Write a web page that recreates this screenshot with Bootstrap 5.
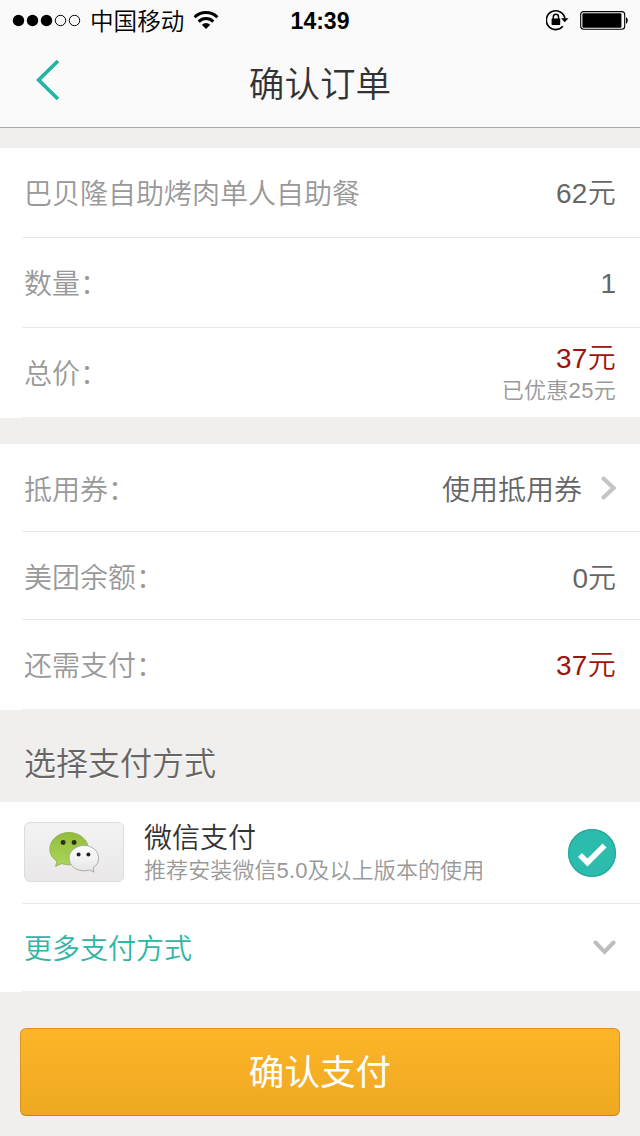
<!DOCTYPE html>
<html lang="zh-CN">
<head>
<meta charset="utf-8">
<meta name="viewport" content="width=device-width, initial-scale=1">
<title>确认订单</title>
<link href="https://cdn.jsdelivr.net/npm/bootstrap@5.3.0/dist/css/bootstrap.min.css" rel="stylesheet">
<style>
  body { font-family: "Liberation Sans", "Noto Sans CJK SC", sans-serif; font-weight: 350; font-size: 28px; line-height: 36px; background: #f0efed; color: #666; min-height: 1136px; }
  svg { display: block; flex: none; }
  .top-area { height: 128px; background: #fafafa; border-bottom: 1px solid #a9a9a9; }
  .status-bar { height: 40px; color: #000; font-size: 23.6px; padding: 0 12px; }
  .status-side { flex: 1 1 0; }
  .carrier { margin: 0 9px; padding-top: 3px; }
  .clock { font-weight: 700; font-size: 23px; padding-top: 2px; }
  .title-bar { height: 87px; padding: 0 36px; }
  .title-bar h1 { font-size: 35.6px; font-weight: 350; line-height: 48px; color: #333; padding-top: 3px; }
  .title-bar .edge { width: 24px; }
  .title-bar a { margin-top: -6px; }
  .sheet { background: #fff; padding-left: 22px; }
  .line-item { height: 90px; padding: 0 24px 0 2px; border-bottom: 1px solid #e8e8e8; }
  .line-item.short { height: 88px; }
  .line-item.pay { height: 102px; }
  .line-item:last-child { border-bottom-color: #f0efed; }
  .caption { color: #999; padding-top: 4px; }
  .amount { padding-top: 3px; }
  .short .caption, .short .amount { padding-top: 6px; }
  .price { color: #9c150d; }
  .digits { letter-spacing: .3px; }
  .fine { font-size: 22px; line-height: 28px; color: #999; }
  .section-title { height: 92px; font-size: 32px; font-weight: 350; color: #666; padding: 17px 24px 0; text-shadow: 0 1px 0 #fff; }
  .pay-logo { width: 100px; height: 60px; margin-top: -1px; border: 1px solid #dcdcdc; border-radius: 6px; background: linear-gradient(#f4f3f3, #e9e7e8); }
  .pay-name { color: #333; }
  .teal { color: #2fb5a5; padding-top: 5px; }
  .confirm { height: 88px; margin: 36px 20px 20px; font-size: 35.6px; border-radius: 6px; color: #fff; border: 1px solid #df9220; border-bottom-color: #c98116; background: linear-gradient(#fdb428, #eea922); }
  .confirm:hover { color: #fff; }
</style>
</head>
<body>
<header class="top-area">
  <div class="status-bar d-flex align-items-center">
    <div class="status-side d-flex align-items-center">
      <svg width="69" height="14" viewBox="0 0 69 14"><g fill="#000"><circle cx="6.5" cy="7.500" r="5.7"/><circle cx="20.5" cy="7.500" r="5.7"/><circle cx="34.5" cy="7.500" r="5.7"/></g><g fill="none" stroke="#000"><circle cx="48.5" cy="7.500" r="5.2"/><circle cx="62.5" cy="7.500" r="5.2"/></g></svg>
      <span class="carrier">中国移动</span>
      <svg width="26" height="20" viewBox="0 0 26 20"><g fill="none" stroke="#000" stroke-width="3"><path d="M1.6 7.2a16.3 16.3 0 0 1 22.8 0"/><path d="M5.7 11.6a10.4 10.4 0 0 1 14.6 0"/></g><path d="M8.8 14.7a6 6 0 0 1 8.4 0L13 19z"/></svg>
    </div>
    <span class="clock">14:39</span>
    <div class="status-side d-flex align-items-center justify-content-end">
      <svg width="24" height="22" viewBox="0 0 24 22"><path d="M16.900 17.3A9.4 9.4 0 1 1 19 9.6" fill="none" stroke="#000" stroke-width="1.6"/><path d="M15 9.300h7.500l-3.800 4z"/><rect x="5.600" y="9.500" width="8.600" height="6.400" rx=".6"/><path d="M7.300 10V7.800a2.600 2.600 0 0 1 5.200 0V10" fill="none" stroke="#000" stroke-width="1.500"/></svg>
      <svg class="ms-2" width="50" height="20" viewBox="0 0 50 20"><rect x="2.700" y="1.600" width="44" height="17.600" rx="3" fill="none" stroke="#000" stroke-width="1.100"/><rect x="4.400" y="3.300" width="39" height="14.400" rx="1"/><path d="M48 7.200c2.300.5 2.300 6 0 6.500z"/></svg>
    </div>
  </div>
  <div class="title-bar d-flex align-items-center justify-content-between">
    <a class="edge" href="#" aria-label="返回"><svg width="24" height="42" viewBox="0 0 24 42" fill="none" stroke="#1fb5a2" stroke-width="3.6"><path d="M22 1 2.600 20 22 39"/></svg></a>
    <h1 class="m-0">确认订单</h1>
    <span class="edge"></span>
  </div>
</header>

<main>
  <section class="sheet" style="margin-top:20px">
    <div class="line-item d-flex align-items-center justify-content-between"><span class="caption">巴贝隆自助烤肉单人自助餐</span><span class="amount digits">62元</span></div>
    <div class="line-item d-flex align-items-center justify-content-between"><span class="caption">数量：</span><span class="amount">1</span></div>
    <div class="line-item d-flex align-items-center justify-content-between"><span class="caption">总价：</span>
      <div class="text-end"><div class="price digits">37元</div><div class="fine digits">已优惠25元</div></div>
    </div>
  </section>

  <section class="sheet" style="margin-top:26px">
    <div class="line-item short d-flex align-items-center justify-content-between"><span class="caption">抵用券：</span>
      <span class="d-flex align-items-center"><span class="amount">使用抵用券</span>
        <svg style="margin-left:19px" width="15" height="24" viewBox="0 0 15 24" fill="none" stroke="#c4c4c4" stroke-width="4" stroke-linecap="round"><path d="M2.500 2.500 12.500 12 2.500 21.500"/></svg></span>
    </div>
    <div class="line-item short d-flex align-items-center justify-content-between"><span class="caption">美团余额：</span><span class="amount">0元</span></div>
    <div class="line-item d-flex align-items-center justify-content-between"><span class="caption">还需支付：</span><span class="amount price digits">37元</span></div>
  </section>

  <h2 class="section-title d-flex align-items-center m-0">选择支付方式</h2>

  <section class="sheet">
    <div class="line-item pay d-flex align-items-center">
      <div class="pay-logo d-flex align-items-center justify-content-center">
        <svg width="52" height="42" viewBox="-.6 0 52 42">
          <defs><linearGradient id="green" x2="0" y2="1"><stop stop-color="#93bd3b"/><stop offset="1" stop-color="#a9d659"/></linearGradient><linearGradient id="white" x2="0" y2="1"><stop stop-color="#fff"/><stop offset="1" stop-color="#e4e5e5"/></linearGradient></defs>
          <path d="M20.500 1.500C9.800 1.500 1.300 8.800 1.300 18c0 5.300 2.700 9.400 7 12.200L7 35.300l6-2.700c2.300.8 5 1.200 7.500 1.200C31 33.800 39.700 27 39.700 18S31 1.500 20.500 1.500z" fill="url(#green)" stroke="#86a945" stroke-width=".8"/>
          <ellipse cx="14.500" cy="11.500" rx="2.500" ry="2.400" fill="#27300f"/><ellipse cx="25.500" cy="11.500" rx="2.500" ry="2.400" fill="#27300f"/>
          <path d="M35.500 14.500c-8.400 0-15 5.600-15 12.700s6.600 12.600 15 12.600c2 0 3.900-.3 5.600-.9l4.300 2.300-.9-4.300c3.500-2.400 5.500-5.800 5.500-9.700 0-7.100-6.400-12.700-14.500-12.700z" fill="url(#white)" stroke="#a3a5a3" stroke-width=".9"/>
          <circle cx="30" cy="23.500" r="2" fill="#222"/><circle cx="39.800" cy="23.500" r="2" fill="#222"/>
        </svg>
      </div>
      <div class="flex-grow-1" style="margin-left:20px"><div class="pay-name">微信支付</div><div class="fine" style="letter-spacing:.1px">推荐安装微信5.0及以上版本的使用</div></div>
      <svg width="48" height="48" viewBox="0 0 48 48"><circle cx="24" cy="24" r="24" fill="#2bbcae"/><circle cx="24" cy="24" r="23.300" fill="none" stroke="#2aa99d" stroke-width="1.300"/><path d="M12 26 19.500 33.500 36.500 16.500" fill="none" stroke="#fff" stroke-width="5.600"/></svg>
    </div>
    <div class="line-item short d-flex align-items-center justify-content-between"><span class="teal">更多支付方式</span>
      <svg width="23" height="15" viewBox="0 0 23 15" fill="none" stroke="#bdbdbd" stroke-width="4" stroke-linecap="round"><path d="M2.500 2.500 11.500 11.800 20.500 2.500"/></svg>
    </div>
  </section>

  <div class="d-flex"><button type="button" class="confirm btn flex-grow-1 p-0"><span class="d-block pt-1">确认支付</span></button></div>
</main>
<script src="https://cdn.jsdelivr.net/npm/bootstrap@5.3.0/dist/js/bootstrap.bundle.min.js"></script>
</body>
</html>
